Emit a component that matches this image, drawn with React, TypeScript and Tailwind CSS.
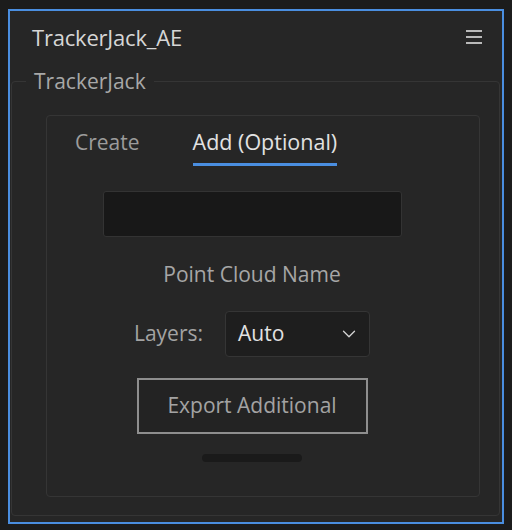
import { ChevronDown } from "lucide-react";

export default function App() {
    return (
        <div className="w-[512px] h-[530px] bg-[#1c1c1c] pt-[9px] pl-[8px] font-['Open_Sans',sans-serif] overflow-hidden">
            <div className="w-[496px] h-[515px] border-2 border-[#4a8ee0] bg-[#262626] flex flex-col">
                {/* panel header */}
                <header className="flex items-center justify-between h-[50px] pl-[22px] pr-[20px] pt-[2px]">
                    <h1 className="text-[22px] text-[#d6d6d6] tracking-[-0.2px]">TrackerJack_AE</h1>
                    <button className="flex flex-col gap-[4px] w-[16px]">
                        <span className="h-[2px] bg-[#b9b9b9]" />
                        <span className="h-[2px] bg-[#b9b9b9]" />
                        <span className="h-[2px] bg-[#b9b9b9]" />
                    </button>
                </header>

                <fieldset className="mt-[6px] ml-px mr-[2px] mb-[6px] flex-1 border border-[#353535] rounded-[4px] pl-[34px] pr-[19px] pb-[18px] flex flex-col">
                    <legend className="-ml-[20px] px-[8px] text-[21px] leading-[28px] text-[#a8a8a8]">TrackerJack</legend>

                    <div className="mt-[20px] flex-1 border border-[#353535] rounded-[4px] pr-[22px] flex flex-col items-center">
                        {/* tabs */}
                        <div className="self-stretch flex gap-[53px] pl-[28px] pt-[11px]">
                            <button className="text-[21px] leading-[30px] text-[#9c9c9c] pb-[9px]">Create</button>
                            <button className="text-[21.5px] leading-[30px] text-[#e2e2e2] pb-[6px] border-b-[3px] border-[#4a8ee0]">Add (Optional)</button>
                        </div>

                        <input className="mt-[25px] w-[299px] h-[46px] bg-[#181818] border border-[#333] rounded-[3px] outline-none px-3 text-[#ddd]" />

                        <p className="mt-[22px] text-[21px] leading-[30px] text-[#a6a6a6]">Point Cloud Name</p>

                        <div className="mt-[22px] flex items-center gap-[22px]">
                            <label className="text-[21px] text-[#a3a3a3]">Layers:</label>
                            <div className="w-[145px] h-[46px] bg-[#1e1e1e] border border-[#353535] rounded-[4px] flex items-center justify-between pl-[12px] pr-[9px]">
                                <span className="text-[21px] text-[#e2e2e2]">Auto</span>
                                <ChevronDown size={22} strokeWidth={1.4} className="text-[#d4d4d4]" />
                            </div>
                        </div>

                        <button className="mt-[21px] w-[231px] h-[56px] border-2 border-[#8e8e8e] bg-[#232323] text-[21px] text-[#a3a3a3]">
                            Export Additional
                        </button>

                        <div className="mt-[20px] w-[100px] h-[8px] rounded-full bg-[#1a1a1a]" />
                    </div>
                </fieldset>
            </div>
        </div>
    )
}
